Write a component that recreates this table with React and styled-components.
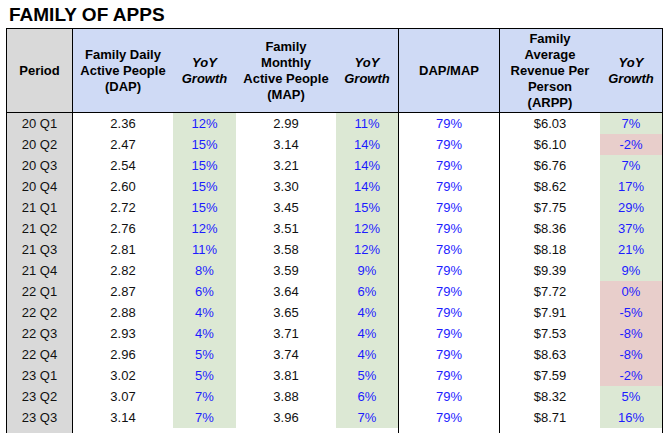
import React from "react";
import styled, { createGlobalStyle } from "styled-components";

const Global = createGlobalStyle`
  html, body { margin: 0; padding: 0; background: #ffffff; overflow: hidden; }
  body { font-family: "Liberation Sans", Arial, sans-serif; color: #000; }
`;

const Page = styled.div`
  width: 668px;
  height: 433px;
  overflow: hidden;
  background: #fff;
`;

const Title = styled.h1`
  margin: 0 0 2px 0;
  padding: 4px 0 0 9px;
  font-size: 19px;
  line-height: 22px;
  font-weight: 700;
  letter-spacing: 0;
  color: #000;
`;

const Sheet = styled.div`
  margin-left: 6px;
  width: 657px;
  box-sizing: border-box;
  border: 1px solid #000;
  border-bottom: none;
  display: grid;
  grid-template-columns: 66px 100px 63px 100px 63px 101px 100px 62px;
  grid-template-rows: 84px;
  grid-auto-rows: 21px;
`;

const tones = {
  header: "#cfdaf5",
  period: "#d9d9d9",
  green: "#dce8d4",
  red: "#e8cecb",
  none: "transparent",
};

const HeadCell = styled.div`
  box-sizing: border-box;
  background: ${(p) => tones[p.$tone || "header"]};
  border-bottom: 1px solid #000;
  border-right: ${(p) => (p.$divider ? "1px solid #000" : "none")};
  display: flex;
  align-items: center;
  justify-content: center;
  text-align: center;
  font-size: 13px;
  line-height: 16px;
  font-weight: 700;
  font-style: ${(p) => (p.$italic ? "italic" : "normal")};
  padding: 0 2px;
`;

const Cell = styled.div`
  box-sizing: border-box;
  background: ${(p) => tones[p.$tone || "none"]};
  border-right: ${(p) => (p.$divider ? "1px solid #000" : "none")};
  display: flex;
  align-items: center;
  justify-content: center;
  font-size: 13px;
  line-height: 16px;
  color: ${(p) => (p.$blue ? "#1c1cff" : "#111")};
`;

const rows = [
  ["20 Q1", "2.36", "12%", "2.99", "11%", "79%", "$6.03", "7%"],
  ["20 Q2", "2.47", "15%", "3.14", "14%", "79%", "$6.10", "-2%"],
  ["20 Q3", "2.54", "15%", "3.21", "14%", "79%", "$6.76", "7%"],
  ["20 Q4", "2.60", "15%", "3.30", "14%", "79%", "$8.62", "17%"],
  ["21 Q1", "2.72", "15%", "3.45", "15%", "79%", "$7.75", "29%"],
  ["21 Q2", "2.76", "12%", "3.51", "12%", "79%", "$8.36", "37%"],
  ["21 Q3", "2.81", "11%", "3.58", "12%", "78%", "$8.18", "21%"],
  ["21 Q4", "2.82", "8%", "3.59", "9%", "79%", "$9.39", "9%"],
  ["22 Q1", "2.87", "6%", "3.64", "6%", "79%", "$7.72", "0%"],
  ["22 Q2", "2.88", "4%", "3.65", "4%", "79%", "$7.91", "-5%"],
  ["22 Q3", "2.93", "4%", "3.71", "4%", "79%", "$7.53", "-8%"],
  ["22 Q4", "2.96", "5%", "3.74", "4%", "79%", "$8.63", "-8%"],
  ["23 Q1", "3.02", "5%", "3.81", "5%", "79%", "$7.59", "-2%"],
  ["23 Q2", "3.07", "7%", "3.88", "6%", "79%", "$8.32", "5%"],
  ["23 Q3", "3.14", "7%", "3.96", "7%", "79%", "$8.71", "16%"],
];

const growthTone = (v) => (parseFloat(v) > 0 ? "green" : "red");

export default function App() {
  return (
    <Page>
      <Global />
      <Title>FAMILY OF APPS</Title>
      <Sheet>
        <HeadCell $tone="period" $divider>Period</HeadCell>
        <HeadCell>
          Family Daily
          <br />
          Active People
          <br />
          (DAP)
        </HeadCell>
        <HeadCell $italic>
          YoY
          <br />
          Growth
        </HeadCell>
        <HeadCell>
          Family
          <br />
          Monthly
          <br />
          Active People
          <br />
          (MAP)
        </HeadCell>
        <HeadCell $italic $divider>
          YoY
          <br />
          Growth
        </HeadCell>
        <HeadCell $divider>DAP/MAP</HeadCell>
        <HeadCell>
          Family
          <br />
          Average
          <br />
          Revenue Per
          <br />
          Person
          <br />
          (ARPP)
        </HeadCell>
        <HeadCell $italic>
          YoY
          <br />
          Growth
        </HeadCell>

        {rows.map((r) => (
          <React.Fragment key={r[0]}>
            <Cell $tone="period" $divider>{r[0]}</Cell>
            <Cell>{r[1]}</Cell>
            <Cell $tone="green" $blue>{r[2]}</Cell>
            <Cell>{r[3]}</Cell>
            <Cell $tone="green" $blue $divider>{r[4]}</Cell>
            <Cell $blue $divider>{r[5]}</Cell>
            <Cell>{r[6]}</Cell>
            <Cell $tone={growthTone(r[7])} $blue>{r[7]}</Cell>
          </React.Fragment>
        ))}

        <Cell $tone="period" $divider />
        <Cell />
        <Cell />
        <Cell />
        <Cell $divider />
        <Cell $divider />
        <Cell />
        <Cell />
      </Sheet>
    </Page>
  );
}
